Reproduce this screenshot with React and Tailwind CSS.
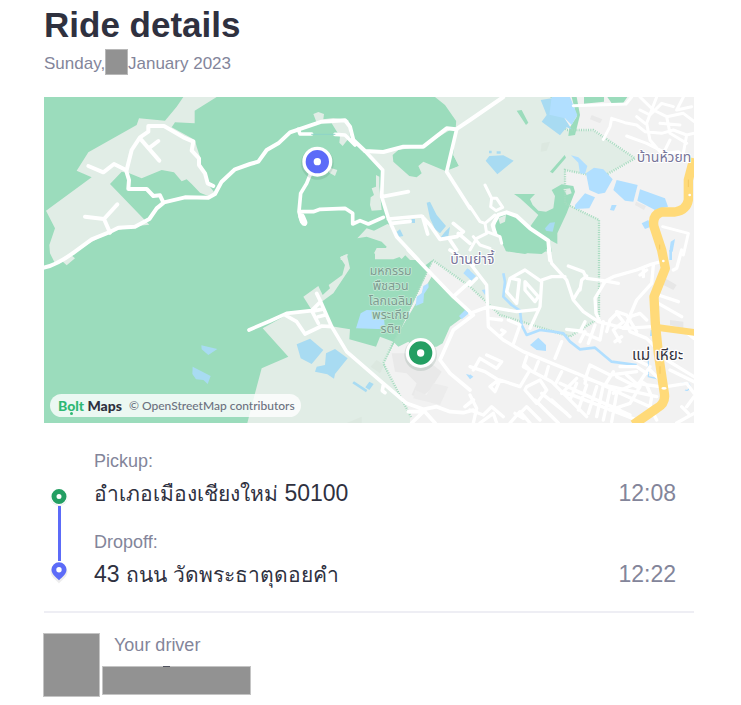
const LIGHT = '#e1ede6';
const GREEN = '#9bdcbc';
const WATER = '#b1dfff';
const LAKE = '#a8dbf2';

function Tile({ x, y, children }) {
  return <g transform={`translate(${x} ${y})`}>{children}</g>;
}

function Land() {
  return (
    <g>
      <rect x="12" y="21" width="1950" height="978" fill={GREEN} />
      <path fill="#f2f2f2" d="M1535 21H1962V999H1110L1030 820L1070 745L1178 510Z" />
      <path fill={LIGHT} d="M430 21H530L464 62V100L405 97L395 112L465 150L470 170L480 200L482 230L500 260L510 290L525 310L510 320L480 308L455 282L440 268L425 274L402 247L365 240L305 265L268 250L245 245L210 282L328 404L290 408L210 425L90 492L105 505L80 526L66 513L45 520L30 490L28 465L45 415L18 362L155 262L110 242L145 187L290 105L297 85L375 92L410 50Z" />
      <path fill={LIGHT} d="M1185 21L1215 45L1250 95V118L1220 115L1150 168L1090 170L1030 186L975 183L1028 240L1022 320L1040 380L1105 480L1150 530L1178 510L1290 590L1380 675L1590 740L1680 685V390L1575 340V240L1685 262L1785 205L1660 122L1580 120L1525 72L1535 21Z" />
      <Tile x={630} y={480}>
        <path fill={LIGHT} d="M-8 519L15 430L35 355L115 320L38 235L110 195L185 180L160 140L205 108L218 135L240 115L236 105L277 75L285 45L270 22L290 12L300 55L250 130L215 155L240 228L300 238L298 268L378 290L390 260L430 275L400 345L480 490V519Z" />
        <path fill="#a4dfc1" d="M548 75L430 275L445 290L475 275L490 290H560L578 280L600 230L655 190L610 140Z" />
        <path fill={LIGHT} d="M372 10L400 22L430 5L455 27L476 5L470 -6H380Z" />
        <path fill="#dce8e0" d="M362 350L380 330L402 345L390 370ZM290 519L335 500V519Z" />
        <path fill="#e9e9e9" d="M425 310H470L500 345L530 330L575 365L540 420L510 445L485 435L500 400L470 370L435 365Z" />
        <path fill="#ececec" d="M495 420L530 435L550 400L595 410L570 465L490 445Z" />
      </Tile>
      <Tile x={630} y={0}>
        <path fill={LIGHT} d="M190 72L205 66L222 72L220 88L250 84L295 90L300 140L278 168L268 158L270 140L245 100L200 98ZM235 232L262 240L255 258L238 248ZM378 255L388 260V290L395 360L365 362L360 345L362 322L372 315L365 295L378 290ZM322 445L350 415L372 422L412 402L435 410L510 510H480L465 495L430 508H375V485L400 488L410 470L395 455L350 440ZM272 500L295 492L285 510H272Z" />
        <path fill={GREEN} d="M428 195L445 180L520 168L600 120L622 118L610 195L627 228L592 245L520 215L505 228L515 250L500 262L478 258L430 215Z" />
        <path fill={LIGHT} d="M625 21H660V480H640L595 240L627 228L610 195Z" />
      </Tile>
      <Tile x={1290} y={0}>
        <path fill={GREEN} d="M140 62L155 60L175 98L168 105ZM305 21H320L330 75L315 135L295 138L298 115L320 80ZM342 21H402V35L342 41ZM412 21H472L460 38L425 40ZM284 195L288 203L248 250L240 245ZM132 312L195 312L180 328L188 345L205 362L228 365L250 355L255 318L245 300L275 283L310 288L315 305L290 370L262 430V462L240 450L245 485L195 482L165 492L108 484L75 415L80 385L105 370L130 375L180 410L205 375L150 325Z" />
        <path fill={LIGHT} d="M280 298L300 295L305 310L290 315Z" />
        <path fill={LIGHT} d="M85 385L108 375L105 395L90 402Z" />
        <path fill="#e9e9e9" d="M365 75L397 88L390 100L360 88ZM498 335L528 348L522 360L495 345Z" />
        <path fill="#dce8e0" d="M215 160L240 155L230 182L212 185Z" />
      </Tile>
      <Tile x={1290} y={480}>
        <path fill={GREEN} d="M105 0H150L145 8ZM163 0H232L215 12L175 10Z" />
        <path fill="#e7e7e7" d="M585 85L620 105L610 120L580 105ZM600 210L640 215V235L600 225Z" />
      </Tile>
      <g fill="none" stroke="#a5dcbf" strokeWidth="7" strokeDasharray="3 4">
        <path d="M1535 21L1525 72L1580 120H1660L1785 205L1685 262L1575 240V340L1677 390V685L1590 740L1380 675L1290 590L1178 510L1030 820L1115 985" />
      </g>
    </g>
  );
}

function Water() {
  return (
    <g fill={WATER}>
      <Tile x={1290} y={0}>
        <path fill={LAKE} d="M212 30L245 25L305 118L290 112L270 136L215 95L230 75ZM47 212L58 198L100 196L131 212L82 253ZM57 182h8v8h-8zM80 184h12v7h-12zM225 415L240 398L255 397L248 425L228 422Z" />
        <path d="M245 21H300L322 75L305 105L285 85L238 74ZM303 196L325 202L352 228L345 252L330 250L325 218ZM348 250L372 233L400 238L428 268L405 308L385 312L358 300ZM440 270L503 285L490 335L465 332L430 300ZM510 298L585 325L594 350L555 360L502 332ZM345 310L375 322L358 355L315 357V345ZM425 345L440 345L432 362L420 360ZM515 400L535 390L542 410L525 417ZM602 455L615 447L608 485H598Z" />
      </Tile>
      <Tile x={630} y={0}>
        <path fill={LAKE} d="M530 338L540 335L560 375L588 408L570 430L555 418L540 385ZM585 425L600 410L595 438L570 445ZM440 425L450 418L460 438L448 440ZM485 387h10v12h-10z" />
      </Tile>
      <Tile x={0} y={480}>
        <path fill={LAKE} d="M484 286L532 297L505 315L485 298ZM458 350L512 378L503 402L490 390L468 388L457 372Z" />
      </Tile>
      <Tile x={630} y={480}>
        <path fill={LAKE} d="M140 283L180 266L220 300L185 342L152 325ZM255 297L293 325L255 372L252 386L232 373L195 365L200 350L225 345L228 310ZM312 394L352 420L348 427L307 400ZM358 395L371 402L358 420L346 412Z" />
        <path d="M318 235L332 190L350 180L400 182L405 238ZM520 108L535 100L536 112L522 132L520 158L497 168L500 140L515 130ZM627 198L645 180L657 190L635 208ZM640 70L652 55L660 60V88ZM648 372L660 375V388Z" />
      </Tile>
      <Tile x={1290} y={480}>
        <path d="M0 62L18 78L0 95ZM35 120L50 118L45 135ZM180 285L205 263L228 285V303L200 300ZM542 240H550V258H540ZM0 373L10 380L0 388ZM598 0H606V30H598Z" />
        <g fill="none" stroke={WATER} strokeWidth="8" strokeLinejoin="round">
          <path d="M100 70L105 95L100 140L125 165L150 182L155 225L170 255L210 240L250 245L280 250L300 275L330 298L375 293L425 335L500 345" />
          <path strokeWidth="4" d="M535 320V380L580 390M635 400Q660 395 660 410Q655 425 645 420" />
        </g>
      </Tile>
    </g>
  );
}

function Roads() {
  return (
    <g fill="none" stroke="#fff" strokeLinecap="round" strokeLinejoin="round">
      <g strokeWidth="12">
        <path d="M12 533Q50 525 105 485L155 448L205 428L235 413L285 410L328 387L350 355L372 337L435 322L505 323L525 312L545 275L585 238L630 222L655 215L680 180L715 160L750 127L845 95L915 91L930 110L940 150L975 183L1030 186L1090 170H1150L1220 115L1248 118L1290 90L1390 21" />
        <path d="M520 288L503 280L495 250L477 225V205L455 182L460 155L430 142L372 108H325V125L300 142L275 180L260 240" />
        <path d="M145 228L190 247L222 222L258 240L267 270L265 297H320L340 318L360 316L370 337M300 145L358 212M330 172L355 153M210 428L192 387L232 343M192 387L135 380" />
      </g>
      <Tile x={630} y={0}>
        <g strokeWidth="11">
          <path d="M182 250L170 280L152 310L147 365L155 395L165 402M147 365H190L210 358L285 355L308 370V402L330 392L355 402L400 382M145 118L150 132H185M255 133L285 135L315 165M345 183L398 240L395 320L415 385L440 440L505 510M398 320L475 305M415 387L515 378L540 405L570 448L620 440L640 425L610 400M425 400L480 394M518 380L533 432M620 118L590 245L660 355M600 450L620 480M625 430L660 460" />
          <path strokeWidth="20" d="M155 380L162 397" />
        </g>
      </Tile>
      <path d="M815 133H885" stroke="#8fd4c8" strokeWidth="3" />
      <Tile x={630} y={480}>
        <g strokeWidth="11">
          <path d="M-3 240L60 213L110 190L185 182L212 155L200 130M212 155L245 230L290 305L400 400L470 460L520 478L560 470L600 485L640 488L670 480M105 195L140 215L165 252L215 228L245 230M185 182L205 220M195 182L215 178M205 200L228 194M400 405L397 422L405 428M475 0L610 140L670 195L610 240L570 330L600 370L660 420M610 140L660 95M475 485H520L485 519M520 480L555 519M600 0L670 45M645 470L670 450" />
        </g>
      </Tile>
      <Tile x={1290} y={0}>
        <g strokeWidth="9">
          <path d="M310 47L468 42L485 21M400 148L420 110L425 85L465 98L500 105L525 125L575 130L610 120L650 135L680 128M470 138L530 160L590 190L625 185L655 215M510 21L550 60L590 80L640 70L680 100M560 21L545 60L530 100L540 150L570 185M590 80L600 130L650 160M640 21L620 60L665 50M525 100L500 80M570 100L630 105M600 150L580 190M650 135L640 190M510 60L540 75L575 40L610 50" />
          <path d="M45 285L65 325L62 350L78 362L98 352L80 325L65 325M0 350L30 395L45 400L75 375M45 400L50 430L20 445L0 480M50 425L90 440L95 460M10 440L30 465L60 475M578 410L655 430L640 495" />
          <path strokeWidth="12" d="M75 430L68 405L85 375L110 367L140 378L180 415L235 452L240 510" />
        </g>
      </Tile>
      <Tile x={1290} y={480}>
        <g strokeWidth="10">
          <path d="M235 0L245 40L290 90L310 150L340 185L385 215L465 235L545 230M215 90L245 80H285M180 235L210 170L215 95L165 60L120 85L110 125L140 160L148 90L125 85M165 95L205 140L195 155L165 120ZM295 48L340 65L350 85L400 92L445 100M330 120L335 90L350 78M312 145L330 115M405 95L375 145L378 190L388 210M400 95L430 80L500 60L545 42L575 35M550 45L545 100L500 150L470 220L480 245L530 265L550 285" />
          <path d="M0 40L50 105L55 230L100 270L160 305L320 370L400 405L560 440M0 190L55 170L140 185L205 178M0 105L20 85M55 205L95 210M90 260L105 245L95 240M130 282L150 225L115 210M255 325L275 275M350 380L345 400M345 388L360 345L420 375L500 365M350 385L405 405L430 365M290 238L330 243L390 270M330 245L345 215M355 280L375 225M390 270L400 215M330 275L345 245M410 245L420 210L440 190L460 215L430 240L450 275M460 235L480 205M480 200L510 190L530 210M440 185L470 195L500 245M435 275L455 260M510 75L530 60M520 55V80" />
          <path d="M170 320L160 350L245 395L350 500M165 345L180 360L150 410L90 390L75 425L60 410L85 390L45 365L0 350M10 360L30 325L80 355L95 335L50 315M170 410L210 390L230 420L200 460L165 420ZM205 335L195 360M235 350L225 385M275 365L255 405M320 385L275 430M270 400L480 495M280 425L500 510M320 400L300 450M350 405L325 480M380 410L355 490M400 405L380 500M420 420L400 510M440 430L425 515M310 420L450 480M245 450L300 500M195 450L265 519M215 430L290 490M400 405L450 430L540 470L560 510M430 430L500 400L570 410M440 380L500 410L540 350M470 375L510 410L480 460L420 480M540 360L590 410L650 400L672 430M500 350L530 370M500 330L530 345M450 350H500M515 395L530 405L545 440L540 470" />
          <path d="M0 435L20 475L10 519M0 480L40 495L65 470L100 500M30 519L70 490L80 519M120 519L150 485L180 519M135 490L160 505M150 490L170 470L210 510M600 360L672 395M590 330L672 380M565 135L625 155M565 160L635 200M635 0L620 55L610 60M650 470L672 440M620 519L672 490M635 470L655 490M640 240L672 265" />
        </g>
      </Tile>
      <g stroke="#ffda79" strokeLinecap="butt">
        <path strokeWidth="28" d="M1962 205L1945 270V330Q1940 360 1905 366H1865Q1835 375 1842 410L1865 480L1876 535L1842 620L1846 700L1855 790L1873 910Q1878 940 1850 955L1780 1004" />
        <path strokeWidth="20" d="M1850 712L1970 728" />
      </g>
      <g stroke="#f3c862" strokeWidth="3"><path d="M1945 270v20M1859 465v12M1860 830v20" /></g>
      <g fill="#fff" stroke="none"><circle cx="1949" cy="315" r="4" /><circle cx="1870" cy="513" r="4" /><ellipse cx="1872" cy="895" rx="8" ry="4" /></g>
    </g>
  );
}

function MapLabels() {
  return (
    <g textAnchor="middle" strokeLinejoin="round" paintOrder="stroke" className="font-['Noto_Sans_Thai','Noto_Sans',sans-serif]">
      <g fill="#7d9c90" stroke="#c3e8d5" strokeWidth="5" fontSize="37">
        <text x="1052" y="556">มหกรรม</text>
        <text x="1052" y="600">พืชสวน</text>
        <text x="1052" y="644">โลกเฉลิม</text>
        <text x="1052" y="688">พระเกีย</text>
        <text x="1052" y="730">รติฯ</text>
      </g>
      <g fill="#77759a" stroke="#fff" strokeWidth="6" fontSize="42">
        <text x="1297" y="522">บ้านย่าจี้</text>
        <text x="1790" y="215" textAnchor="start">บ้านห้วยท</text>
      </g>
      <g fill="#343440" stroke="#fff" strokeWidth="7" fontSize="46" textAnchor="start">
        <text x="1776" y="810">แม่</text>
        <text x="1846" y="810">เหียะ</text>
      </g>
    </g>
  );
}

function Marker({ x, y, color }) {
  return (
    <g>
      <circle cx={x} cy={y + 5} r="49" fill="#23523c" opacity=".12" />
      <circle cx={x} cy={y} r="45" fill="#fff" />
      <circle cx={x} cy={y} r="23" fill="none" stroke={color} strokeWidth="24" />
    </g>
  );
}

function RideMap() {
  return (
    <div className="relative mt-[18px]">
      <svg viewBox="12 21 1950 978" className="block w-full" role="img" aria-label="Route map">
        <Land />
        <Water />
        <Roads />
        <MapLabels />
        <Marker x={832} y={215} color="#5c6bf8" />
        <Marker x={1142} y={789} color="#249f63" />
      </svg>
      <div className="absolute bottom-[6px] left-[6px] flex h-[23px] items-center gap-[7px] rounded-full bg-white/80 pr-[6px] pl-2 font-['Lato',sans-serif] whitespace-nowrap">
        <span className="text-[14px] font-black text-[#2f313f]">
          <span className="relative text-[#2fb874]">
            Bolt
            <span className="absolute -bottom-px left-[12px] size-[3px] rounded-full bg-[#2fb874]" />
          </span>{' '}
          Maps
        </span>
        <span className="text-[12px] font-medium text-[#6c7280]">© OpenStreetMap contributors</span>
      </div>
    </div>
  );
}

function Stop({ label, children, time }) {
  return (
    <div>
      <p className="text-[18px] leading-6 text-[#83859a]">{label}</p>
      <div className="mt-1 flex justify-between pr-[18px] text-[23px] leading-8">
        <p className="h-8 text-[#2f313f]">{children}</p>
        <time className="text-[#83859a]">{time}</time>
      </div>
    </div>
  );
}

export default function App() {
  return (
    <main className="bg-white pt-1 pr-[47px] pb-2 pl-11 font-['Liberation_Sans',Arial,sans-serif]">
      <h1 className="text-[35px] leading-[42px] font-bold text-[#2f313f]">Ride details</h1>
      <p className="mt-[3px] flex text-[17px] leading-[30px] text-[#83859a]">
        <span className="w-[61px]">Sunday,</span>
        <span className="relative h-[26px] w-[23px] border border-[#b8b8b8] bg-[#929292]" />
        <span>January 2023</span>
      </p>
      <RideMap />
      <section className="mt-[26px] flex">
        <div className="flex w-[30px] shrink-0 flex-col items-center pt-[37px]">
          <svg viewBox="0 0 20 20" className="size-5 shrink-0">
            <circle cx="10" cy="11.5" r="8.5" fill="#000" opacity=".08" />
            <circle cx="10" cy="10.5" r="8.5" fill="#fff" />
            <circle cx="10" cy="10.5" r="5" fill="none" stroke="#249f63" strokeWidth="5" />
          </svg>
          <div className="h-[55px] w-[3px] bg-[#5c6bf8]" />
          <svg viewBox="0 0 20 24" className="h-6 w-5 shrink-0">
            <path d="M10 2a8.500 8.500 0 0 1 8.500 8.500c0 5-5 8-8.500 12-3.500-4-8.500-7-8.500-12A8.500 8.500 0 0 1 10 2Z" fill="#000" opacity=".07" />
            <path d="M10 1.200a7.500 7.500 0 0 1 7.500 7.500c0 4.500-4.500 7.500-7.500 10.500-3-3-7.500-6-7.500-10.500A7.500 7.500 0 0 1 10 1.200Z" fill="#5c6bf8" />
            <circle cx="10" cy="8.700" r="2.700" fill="#fff" />
          </svg>
        </div>
        <div className="ml-5 flex-1 space-y-[21px]">
          <Stop label="Pickup:" time="12:08">
            <span className="text-[21px]">อำเภอเมืองเชียงใหม่</span> 50100
          </Stop>
          <Stop label="Dropoff:" time="12:22">
            43 <span className="text-[21px]">ถนน วัดพระธาตุดอยคำ</span>
          </Stop>
        </div>
      </section>
      <hr className="mt-[21px] border-t-2 border-[#eeeef4]" />
      <section className="mt-5 flex">
        <div className="-ml-px h-16 w-[57px] border border-[#c4c4c4] bg-[#929292]" />
        <div className="ml-[2px]">
          <p className="ml-3 text-[18px] leading-6 text-[#83859a]">Your driver</p>
          <div className="mt-[9px] h-[29px] w-[149px] border border-[#c4c4c4] bg-[#929292]">
            <div className="-mt-px ml-[60px] h-px w-[7px] bg-[#50525e]" />
          </div>
        </div>
      </section>
    </main>
  );
}
